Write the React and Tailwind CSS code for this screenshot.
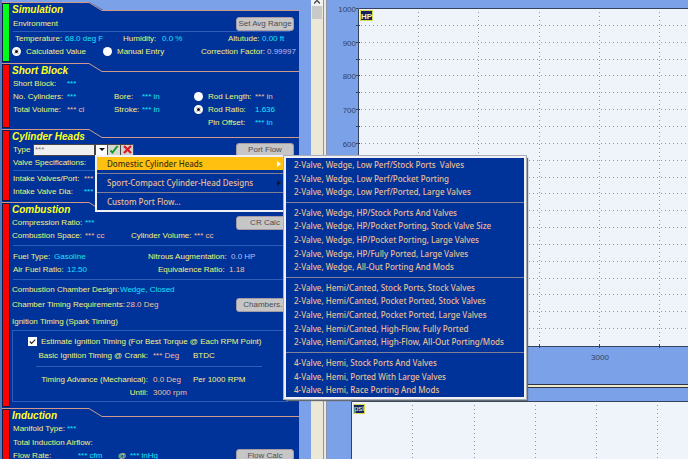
import React from "react";

const TONES = {
  label: "text-[#f3f37a]",
  cyan: "text-[#18e2fa]",
  peach: "text-[#f4bd9c]",
  lilac: "text-[#bfb8f2]",
};

function Text({ tone = "label", className = "", children }) {
  return <span className={`shrink-0 whitespace-pre ${TONES[tone]} ${className}`}>{children}</span>;
}

function Row({ className = "", children }) {
  return <div className={`flex h-[13px] items-center ${className}`}>{children}</div>;
}

function Rule({ className = "" }) {
  return <div className={`h-px bg-[#2e5cb8] ${className}`} />;
}

function GrayButton({ children }) {
  return (
    <button
      type="button"
      className="ml-auto mr-[5px] h-[14px] w-[58px] shrink-0 whitespace-nowrap rounded-[3px] border border-[#a59ba6] bg-[#c6c6c6] text-center text-[8px] leading-[12px] text-[#4c4c55]"
    >
      {children}
    </button>
  );
}

function Section({ title, bar, above = "bg-[#003399]", aboveFill = "#003399", className = "", children }) {
  return (
    <section className={`flex shrink-0 bg-[#003399] ${className}`}>
      <div className="flex w-[8px] shrink-0 flex-col border-t border-[#cf9a8c]">
        <div className={`mb-px flex-1 border border-[#101c40] ${bar}`} />
      </div>
      <div className="min-w-0 flex-1">
        <div className="flex h-[14px]">
          <h2 className="w-[79px] shrink-0 whitespace-nowrap border-t border-[#cf9a8c] pl-[2px] text-[10px] font-bold italic leading-[14px] text-[#ffff20]">
            {title}
          </h2>
          <svg width="14" height="9" viewBox="0 0 14 9" className="shrink-0" aria-hidden="true">
            <path d="M0 0H14V8Z" fill={aboveFill} />
            <path d="M0 .5L13 8.5H14" fill="none" stroke="#cf9a8c" />
          </svg>
          <div className={`h-[9px] flex-1 border-b border-[#cf9a8c] ${above}`} />
        </div>
        {children}
      </div>
    </section>
  );
}

function Radio({ name, checked, className = "", children }) {
  return (
    <label className={`flex shrink-0 items-center whitespace-nowrap ${TONES.label} ${className}`}>
      <input
        type="radio"
        name={name}
        defaultChecked={checked}
        className="m-0 size-[9px] shrink-0 appearance-none rounded-full bg-white checked:border-2 checked:border-white checked:bg-[#111] checked:ring-1 checked:ring-inset checked:ring-white"
      />
      <span className="pl-[5px]">{children}</span>
    </label>
  );
}

function ReportPanel() {
  return (
    <main className="flex h-full w-[297px] shrink-0 flex-col overflow-hidden pt-[2px] text-[8px] leading-[13px]">
      <Section title="Simulation" bar="bg-[#00ff18]" above="bg-[#7ba2e9]" aboveFill="#7ba2e9" className="h-[61px]">
        <Row className="mt-px pl-[3px]">
          <Text>Environment</Text>
          <GrayButton>Set Avg Range</GrayButton>
        </Row>
        <Rule className="ml-[3px] mr-[9px] mt-px" />
        <Row className="pl-[5px]">
          <Text className="w-[50px]">Temperature:</Text>
          <Text tone="cyan" className="w-[58px]">68.0 deg F</Text>
          <Text className="w-[39px]">Humidity:</Text>
          <Text tone="cyan" className="w-[66px]">0.0 %</Text>
          <Text className="w-[34px]">Altutude:</Text>
          <Text tone="cyan">0.00 ft</Text>
        </Row>
        <Row className="pl-[2px]">
          <Radio name="environment" checked className="w-[91px]">Calculated Value</Radio>
          <Radio name="environment" className="w-[98px]">Manual Entry</Radio>
          <Text className="w-[66px]">Correction Factor:</Text>
          <Text tone="lilac">0.99997</Text>
        </Row>
      </Section>

      <Section title="Short Block" bar="bg-[#ff0000]" className="h-[66px]">
        <Row className="pl-[3px]">
          <Text className="w-[54px]">Short Block:</Text>
          <Text tone="cyan">***</Text>
        </Row>
        <Row className="pl-[3px]">
          <Text className="w-[54px]">No. Cylinders:</Text>
          <Text tone="cyan" className="w-[47px]">***</Text>
          <Text className="w-[28px]">Bore:</Text>
          <Text tone="cyan" className="w-[52px]">*** in</Text>
          <Radio name="rod" className="w-[61px]">Rod Length:</Radio>
          <Text tone="peach">*** in</Text>
        </Row>
        <Row className="pl-[3px]">
          <Text className="w-[54px]">Total Volume:</Text>
          <Text tone="peach" className="w-[47px]">*** ci</Text>
          <Text className="w-[28px]">Stroke:</Text>
          <Text tone="cyan" className="w-[52px]">*** in</Text>
          <Radio name="rod" checked className="w-[61px]">Rod Ratio:</Radio>
          <Text tone="cyan">1.636</Text>
        </Row>
        <Row className="pl-[198px]">
          <Text className="w-[47px]">Pin Offset:</Text>
          <Text tone="cyan">*** in</Text>
        </Row>
      </Section>

      <Section title="Cylinder Heads" bar="bg-[#ff0000]" className="h-[73px]">
        <Row className="pl-[3px]">
          <label htmlFor="head-type" className={`w-[20px] shrink-0 ${TONES.label}`}>Type</label>
          <input
            id="head-type"
            defaultValue="***"
            className="h-[12px] w-[62px] shrink-0 border border-[#464646] bg-[#f0f0f0] px-px text-[8px] leading-[10px] text-[#777] outline-none"
          />
          <div className="flex h-[12px] shrink-0 items-center gap-px bg-[#464646] px-px">
            <button type="button" aria-label="Open list" className="flex h-[10px] w-[11px] items-center justify-center bg-white">
              <svg width="6" height="3" viewBox="0 0 6 3"><path d="M0 0H6L3 3Z" fill="#111" /></svg>
            </button>
            <button type="button" aria-label="Accept" className="flex h-[10px] w-[12px] items-center justify-center bg-[#d5d8d2]">
              <svg width="10" height="9" viewBox="0 0 10 9"><path d="M1.500 5.500L3.500 7.500L8.500 1" fill="none" stroke="#169b25" strokeWidth="2" /></svg>
            </button>
            <button type="button" aria-label="Cancel" className="flex h-[10px] w-[12px] items-center justify-center bg-[#d5d0d0]">
              <svg width="9" height="9" viewBox="0 0 9 9"><path d="M1 1L8 8M8 1L1 8" stroke="#d91c24" strokeWidth="2.400" /></svg>
            </button>
          </div>
          <GrayButton>Port Flow</GrayButton>
        </Row>
        <Row><Text className="pl-[3px]">Valve Specifications:</Text></Row>
        <Rule className="ml-[3px] mr-[9px] my-px" />
        <Row className="pl-[3px]">
          <Text className="w-[71px]">Intake Valves/Port:</Text>
          <Text tone="peach">***</Text>
        </Row>
        <Row className="pl-[3px]">
          <Text className="w-[71px]">Intake Valve Dia:</Text>
          <Text tone="cyan">***</Text>
        </Row>
      </Section>

      <Section title="Combustion" bar="bg-[#ff0000]" className="h-[206px]">
        <Row className="pl-[2px]">
          <Text className="w-[73px]">Compression Ratio:</Text>
          <Text tone="cyan">***</Text>
          <GrayButton>CR Calc</GrayButton>
        </Row>
        <Row className="pl-[2px]">
          <Text className="w-[73px]">Combustion Space:</Text>
          <Text tone="peach" className="w-[46px]">*** cc</Text>
          <Text className="w-[63px]">Cylinder Volume:</Text>
          <Text tone="peach">*** cc</Text>
        </Row>
        <Rule className="ml-[3px] mr-[9px] mt-[3px] mb-[4px]" />
        <Row className="pl-[3px]">
          <Text className="w-[41px]">Fuel Type:</Text>
          <Text tone="cyan" className="w-[94px]">Gasoline</Text>
          <Text className="w-[83px]">Nitrous Augmentation:</Text>
          <Text tone="lilac">0.0 HP</Text>
        </Row>
        <Row className="pl-[3px]">
          <Text className="w-[54px]">Air Fuel Ratio:</Text>
          <Text tone="cyan" className="w-[91px]">12.50</Text>
          <Text className="w-[71px]">Equivalence Ratio:</Text>
          <Text tone="peach">1.18</Text>
        </Row>
        <Rule className="ml-[3px] mr-[9px] mt-[3px] mb-[3px]" />
        <Row className="pl-[2px]">
          <Text className="w-[108px]">Combustion Chamber Design:</Text>
          <Text tone="cyan">Wedge, Closed</Text>
        </Row>
        <Row className="mt-[2px] pl-[2px]">
          <Text className="w-[114px]">Chamber Timing Requirements:</Text>
          <Text tone="peach">28.0 Deg</Text>
          <GrayButton>Chambers...</GrayButton>
        </Row>
        <Row className="mt-[4px] pl-[2px]"><Text>Ignition Timing (Spark Timing)</Text></Row>
        <div className="ml-[2px] mr-[11px] mt-[2px] h-[72px] border border-[#2e5cb8] pt-[3px]">
          <label className={`flex h-[14px] items-center whitespace-nowrap pl-[15px] ${TONES.label}`}>
            <span className="relative mr-[4px] flex size-[9px] shrink-0">
              <input type="checkbox" defaultChecked className="peer m-0 size-[9px] appearance-none bg-white" />
              <svg viewBox="0 0 10 10" className="pointer-events-none absolute inset-0 hidden peer-checked:block">
                <path d="M2 5L4 7L8 3" fill="none" stroke="#222" strokeWidth="1.300" />
              </svg>
            </span>
            Estimate Ignition Timing (For Best Torque @ Each RPM Point)
          </label>
          <Row className="mt-px">
            <Text className="w-[135px] text-right">Basic Ignition Timing @ Crank:</Text>
            <Text tone="peach" className="w-[45px] pl-[5px]">*** Deg</Text>
            <Text>BTDC</Text>
          </Row>
          <Rule className="ml-[23px] mr-[25px] mt-[4px] mb-[6px]" />
          <Row>
            <Text className="w-[135px] text-right">Timing Advance (Mechanical):</Text>
            <Text tone="peach" className="w-[45px] pl-[5px]">0.0 Deg</Text>
            <Text>Per 1000 RPM</Text>
          </Row>
          <Row>
            <Text className="w-[135px] text-right">Until:</Text>
            <Text tone="peach" className="pl-[5px]">3000 rpm</Text>
          </Row>
        </div>
      </Section>

      <Section title="Induction" bar="bg-[#ff0000]" className="h-[80px]">
        <Row className="pl-[3px]">
          <Text className="w-[54px]">Manifold Type:</Text>
          <Text tone="cyan">***</Text>
        </Row>
        <Row className="mt-px pl-[3px]"><Text>Total Induction Airflow:</Text></Row>
        <Row className="pl-[3px]">
          <Text className="w-[65px]">Flow Rate:</Text>
          <Text tone="cyan" className="w-[40px]">*** cfm</Text>
          <Text className="w-[12px]">@</Text>
          <Text tone="cyan">*** inHg</Text>
          <GrayButton>Flow Calc</GrayButton>
        </Row>
      </Section>
    </main>
  );
}

const PORT_MENU = [
  { size: "h-[41px]", items: ["2-Valve, Wedge, Low Perf/Stock Ports  Valves", "2-Valve, Wedge, Low Perf/Pocket Porting", "2-Valve, Wedge, Low Perf/Ported, Large Valves"] },
  { size: "h-[68px]", items: ["2-Valve, Wedge, HP/Stock Ports And Valves", "2-Valve, Wedge, HP/Pocket Porting, Stock Valve Size", "2-Valve, Wedge, HP/Pocket Porting, Large Valves", "2-Valve, Wedge, HP/Fully Ported, Large Valves", "2-Valve, Wedge, All-Out Porting And Mods"] },
  { size: "h-[68px]", items: ["2-Valve, Hemi/Canted, Stock Ports, Stock Valves", "2-Valve, Hemi/Canted, Pocket Ported, Stock Valves", "2-Valve, Hemi/Canted, Pocket Ported, Large Valves", "2-Valve, Hemi/Canted, High-Flow, Fully Ported", "2-Valve, Hemi/Canted, High-Flow, All-Out Porting/Mods"] },
  { size: "h-[41px]", items: ["4-Valve, Hemi, Stock Ports And Valves", "4-Valve, Hemi, Ported With Large Valves", "4-Valve, Hemi, Race Porting And Mods"] },
];

function Arrow({ color }) {
  return (
    <svg width="4" height="6" viewBox="0 0 4 6" className="ml-auto mr-[4px]" aria-hidden="true">
      <path d="M0 0L4 3L0 6Z" fill={color} />
    </svg>
  );
}

function Menus() {
  return (
    <div className="font-['Noto_Sans','Open_Sans',sans-serif] text-[8px] font-medium leading-[10px] text-[#e8be94]">
      <div role="menu" className="absolute left-[95px] top-[155px] w-[192px] border-2 border-[#f0f0f6] bg-[#003399]">
        <button type="button" role="menuitem" className="flex h-[13px] w-full items-center bg-[#ffc010] pl-[10px] text-[#3a3212]">
          Domestic Cylinder Heads<Arrow color="#fff" />
        </button>
        <div className="mt-[3px] h-px bg-[#7f8296]" />
        <button type="button" role="menuitem" className="flex h-[18px] w-full items-center pl-[10px]">
          Sport-Compact Cylinder-Head Designs<Arrow color="#101828" />
        </button>
        <div className="h-px bg-[#7f8296]" />
        <button type="button" role="menuitem" className="flex h-[17px] w-full items-center pl-[10px]">Custom Port Flow...</button>
      </div>
      <div role="menu" className="absolute left-[284px] top-[156px] w-[242px] divide-y divide-[#7f8296] border-2 border-[#f0f0f6] bg-[#003399] shadow-[0_0_0_1px_#a9adb5,2px_2px_1px_#646a70]">
        {PORT_MENU.map((group) => (
          <div key={group.items[0]} className="py-[3px] first:pt-0 last:pb-0">
            <div className={`flex flex-col ${group.size}`}>
              {group.items.map((item) => (
                <button key={item} type="button" role="menuitem" className="flex min-h-0 flex-1 items-center whitespace-pre pl-[8px] text-left">
                  {item}
                </button>
              ))}
            </div>
          </div>
        ))}
      </div>
    </div>
  );
}

const H_LINES = Array.from({ length: 19 }, (_, i) => Math.round(9 + (i + 1) * 16.85));
const V_LINES = [92, 152, 213, 273, 333];
const LOWER_LINES = [85, 147, 208, 269, 330];
const GRID = { stroke: "#8f9aaa", strokeDasharray: "1 3", strokeWidth: 1 };

function PowerChart() {
  return (
    <svg className="block h-[384px] w-full shrink-0 bg-[#7ba2e9]" aria-label="Horsepower chart">
      <rect x="31" y="8" width="100%" height="338" fill="#eff4fb" />
      {H_LINES.map((y) => (
        <g key={y}>
          <line x1="34" x2="100%" y1={y - 0.5} y2={y - 0.5} {...GRID} />
          <line x1="29" x2="33" y1={y - 0.5} y2={y - 0.5} stroke="#34425e" />
        </g>
      ))}
      {V_LINES.map((x) => (
        <g key={x}>
          <line x1={x - 0.5} x2={x - 0.5} y1="12" y2="345" {...GRID} />
          <line x1={x - 0.5} x2={x - 0.5} y1="344" y2="348" stroke="#34425e" />
        </g>
      ))}
      <path d="M31.500 348V8.500H2000M29 8.500H31M31 346.500H2000" fill="none" stroke="#34425e" />
      <g fill="#34425e" fontSize="8" fontFamily="'Liberation Sans',Arial,sans-serif">
        {[1000, 900, 800, 700, 600].map((v, i) => (
          <text key={v} x="29" y={12 + Math.round(i * 33.7)} textAnchor="end">{v}</text>
        ))}
        <text x="273" y="360" textAnchor="middle">3000</text>
      </g>
      <rect x="33.500" y="10.500" width="12" height="10" fill="#15235c" stroke="#d8d84c" />
      <text x="39.500" y="19" textAnchor="middle" fontSize="8" fontWeight="bold" fill="#f4f4b8" fontFamily="'Liberation Sans',Arial,sans-serif">HP</text>
    </svg>
  );
}

function PressureChart() {
  return (
    <svg className="block min-h-0 w-full flex-1 bg-[#7ba2e9]" aria-label="Pressure chart">
      <rect x="25" y="14" width="100%" height="100%" fill="#eff4fb" />
      {LOWER_LINES.map((x) => (
        <line key={x} x1={x + 0.5} x2={x + 0.5} y1="17" y2="100%" {...GRID} />
      ))}
      <path d="M24.500 2000V13.500H2000" fill="none" stroke="#34425e" />
      <rect x="26.500" y="16.500" width="11" height="9" fill="#15235c" stroke="#d8d84c" />
      <text x="32" y="23" textAnchor="middle" fontSize="8" fill="#f4f4b8" fontFamily="'Liberation Sans',Arial,sans-serif">psi</text>
    </svg>
  );
}

export default function App() {
  return (
    <div className="relative flex h-screen w-full overflow-hidden bg-[#7ba2e9] font-['Liberation_Sans',Arial,sans-serif]">
      <div className="w-[2px] shrink-0 bg-[#5879bd]" />
      <ReportPanel />
      <div className="w-[12px] shrink-0" />
      <div className="flex w-[12px] shrink-0 flex-col bg-[#ebe8d8]">
        <button type="button" aria-label="Scroll up" className="flex h-[6px] items-start justify-center bg-[#f2f2f0]">
          <svg width="6" height="4" viewBox="0 0 6 4"><path d="M0 3.500L3 .500L6 3.500" fill="none" stroke="#444" strokeWidth="1.300" /></svg>
        </button>
        <div className="mx-px h-[13px] bg-[#c9c9c9]" />
      </div>
      <div className="w-[4px] shrink-0 border-x border-[#8d93a5] bg-[#e8e8ec]" />
      <div className="flex min-w-0 flex-1 flex-col">
        <PowerChart />
        <div className="h-[4px] shrink-0 border-y border-[#2b3448] bg-[#efeccb]" />
        <PressureChart />
      </div>
      <Menus />
    </div>
  );
}
